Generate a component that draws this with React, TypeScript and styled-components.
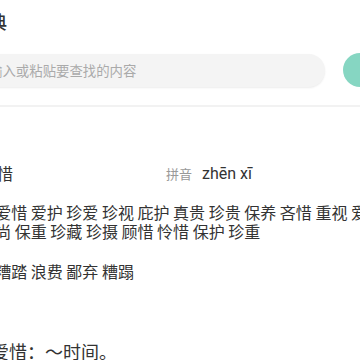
import React from "react";
import styled, { createGlobalStyle } from "styled-components";

const Global = createGlobalStyle`
  html, body { margin: 0; padding: 0; background: #fff; overflow: hidden; }
  body { font-family: "Noto Sans CJK SC", "Noto Sans", sans-serif; color: #333; }
`;

const Page = styled.div`
  margin-left: -60px;
  width: 480px;
  height: 360px;
  overflow: hidden;
`;

const Header = styled.header`
  padding: 9px 0 0 31px;
  height: 24px;
`;

const Title = styled.h1`
  margin: 0;
  font-size: 18px;
  line-height: 24px;
  font-weight: 500;
  color: #333;
`;

const SearchRow = styled.div`
  margin-top: 20px;
  display: flex;
  align-items: center;
  gap: 18px;
  padding-left: 20px;
`;

const SearchBox = styled.input`
  box-sizing: border-box;
  width: 365px;
  height: 33px;
  border: none;
  outline: none;
  border-radius: 17px;
  background: #f4f4f4;
  box-shadow: 0 1px 2px rgba(0, 0, 0, 0.08);
  padding: 0 0 0 15.7px;
  font-family: "Noto Sans CJK SC", sans-serif;
  font-size: 13.4px;
  color: #333;
  &::placeholder { color: #aaa; }
`;

const GoButton = styled.button`
  width: 34px;
  height: 34px;
  border-radius: 50%;
  border: none;
  padding: 0;
  background: #86d6c2;
  flex: none;
`;

const Divider = styled.hr`
  margin: 18px 0 0;
  border: none;
  height: 2px;
  background: #f2f2f2;
`;

const WordRow = styled.div`
  margin-top: 55px;
  display: flex;
  align-items: center;
  padding-left: 41px;
  height: 22px;
`;

const Word = styled.div`
  width: 185px;
  font-size: 16px;
  line-height: 22px;
  color: #333;
`;

const PinyinLabel = styled.span`
  font-size: 13px;
  color: #999;
  margin-right: 10px;
`;

const Pinyin = styled.span`
  font-family: Roboto, "Liberation Sans", sans-serif;
  font-size: 16px;
  font-weight: 400;
  color: #333;
`;

const Section = styled.div<{ $top: number }>`
  margin-top: ${(p) => p.$top}px;
  display: grid;
  grid-template-columns: 35.2px 410px;
  padding-left: 20px;
`;

const SectionLabel = styled.div`
  font-size: 12px;
  line-height: 19px;
  color: #999;
`;

const WordList = styled.p`
  margin: 0;
  font-size: 16px;
  line-height: 19px;
  color: #333;
`;

const Definition = styled.p`
  margin: 58px 0 0;
  padding-left: 15px;
  font-size: 18px;
  line-height: 24px;
  color: #333;
`;

const synonyms = ["爱惜", "爱护", "珍爱", "珍视", "庇护", "真贵", "珍贵", "保养", "吝惜", "重视", "爱抚", "崇尚", "保重", "珍藏", "珍摄", "顾惜", "怜惜", "保护", "珍重"];
const antonyms = ["糟踏", "浪费", "鄙弃", "糟蹋"];

export default function App() {
  return (
    <>
      <Global />
      <Page>
        <Header>
          <Title>词典</Title>
        </Header>
        <SearchRow>
          <SearchBox placeholder="请输入或粘贴要查找的内容" />
          <GoButton aria-label="搜索" />
        </SearchRow>
        <Divider />
        <WordRow>
          <Word>珍惜</Word>
          <PinyinLabel>拼音</PinyinLabel>
          <Pinyin>zhēn xī</Pinyin>
        </WordRow>
        <Section $top={19}>
          <SectionLabel>近义</SectionLabel>
          <WordList>{synonyms.join(" ")}</WordList>
        </Section>
        <Section $top={21}>
          <SectionLabel>反义</SectionLabel>
          <WordList>{antonyms.join(" ")}</WordList>
        </Section>
        <Definition>珍重爱惜：～时间。</Definition>
      </Page>
    </>
  );
}
